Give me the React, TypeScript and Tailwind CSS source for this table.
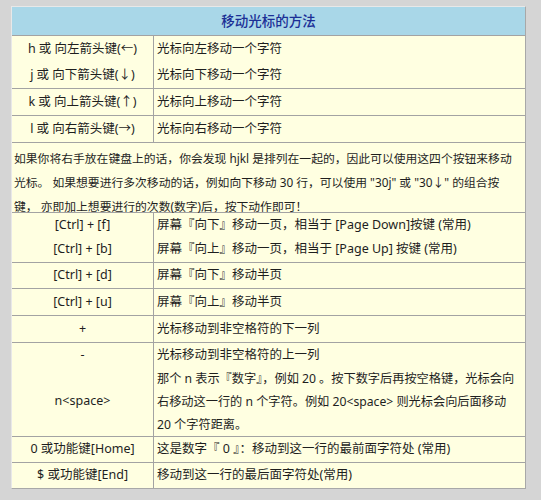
const font = { fontFamily: '"Noto Sans", "Noto Sans CJK SC", sans-serif' };

type Row = { key: string; desc: React.ReactNode; h: string; line?: boolean };

const topRows: Row[] = [
  { key: 'h 或 向左箭头键(←)', desc: '光标向左移动一个字符', h: 'h-[26px]', line: true },
  { key: 'j 或 向下箭头键(↓)', desc: '光标向下移动一个字符', h: 'h-[26px]' },
  { key: 'k 或 向上箭头键(↑)', desc: '光标向上移动一个字符', h: 'h-[26px]', line: true },
  { key: 'l 或 向右箭头键(→)', desc: '光标向右移动一个字符', h: 'h-[26px]', line: true },
];

const bottomRows: Row[] = [
  { key: '[Ctrl] + [f]', desc: '屏幕『向下』移动一页，相当于 [Page Down]按键 (常用)', h: 'h-[24px]', line: true },
  { key: '[Ctrl] + [b]', desc: '屏幕『向上』移动一页，相当于 [Page Up] 按键 (常用)', h: 'h-[25px]' },
  { key: '[Ctrl] + [d]', desc: '屏幕『向下』移动半页', h: 'h-[25px]', line: true },
  { key: '[Ctrl] + [u]', desc: '屏幕『向上』移动半页', h: 'h-[26px]', line: true },
  { key: '+', desc: '光标移动到非空格符的下一列', h: 'h-[26px]', line: true },
  { key: '-', desc: '光标移动到非空格符的上一列', h: 'h-[24px]', line: true },
];

function TableRow({ row }: { row: Row }) {
  return (
    <div className={`flex ${row.line ? 'border-t border-[#a3a3a3]' : ''}`}>
      <div className={`w-[142px] shrink-0 border-r border-[#a3a3a3] flex items-center justify-center ${row.h}`}>
        {row.key}
      </div>
      <div className={`flex-1 flex items-center pl-[3px] ${row.h}`}>{row.desc}</div>
    </div>
  );
}

export default function App() {
  return (
    <div className="w-[541px] h-[500px] bg-[#d5d5d5] pt-[6px] pl-[11px]" style={font}>
      <div className="w-[515px] border border-[#a8a8a8] border-t-[#e8e8e8] border-l-[#e8e8e8] bg-[#ffffe1] text-[12.5px] text-[#1e1e1e]">
        <div className="h-[28px] bg-[#a9d7e8] flex items-center justify-center text-[13.5px] font-medium text-[#1b2f96]">
          移动光标的方法
        </div>
        {topRows.map((r) => (
          <TableRow key={r.key} row={r} />
        ))}
        <div className="border-t border-[#a3a3a3] h-[70px] px-[2px] pt-[3px] text-[11.8px] leading-[24px] whitespace-nowrap">
          如果你将右手放在键盘上的话，你会发现 hjkl 是排列在一起的，因此可以使用这四个按钮来移动
          <br />
          光标。 如果想要进行多次移动的话，例如向下移动 30 行，可以使用 "30j" 或 "30↓" 的组合按
          <br />
          键， 亦即加上想要进行的次数(数字)后，按下动作即可！
        </div>
        {bottomRows.map((r) => (
          <TableRow key={r.key} row={r} />
        ))}
        <div className="flex">
          <div className="w-[142px] shrink-0 border-r border-[#a3a3a3] flex items-center justify-center h-[69px]">
            n&lt;space&gt;
          </div>
          <div className="flex-1 pl-[3px] h-[69px] text-[12.2px] leading-[23px] whitespace-nowrap">
            那个 n 表示『数字』，例如 20 。按下数字后再按空格键，光标会向
            <br />
            右移动这一行的 n 个字符。例如 20&lt;space&gt; 则光标会向后面移动
            <br />
            20 个字符距离。
          </div>
        </div>
        <TableRow row={{ key: '0 或功能键[Home]', desc: '这是数字『 0 』：移动到这一行的最前面字符处 (常用)', h: 'h-[25px]', line: true }} />
        <TableRow row={{ key: '$ 或功能键[End]', desc: '移动到这一行的最后面字符处(常用)', h: 'h-[25px]', line: true }} />
      </div>
    </div>
  );
}
